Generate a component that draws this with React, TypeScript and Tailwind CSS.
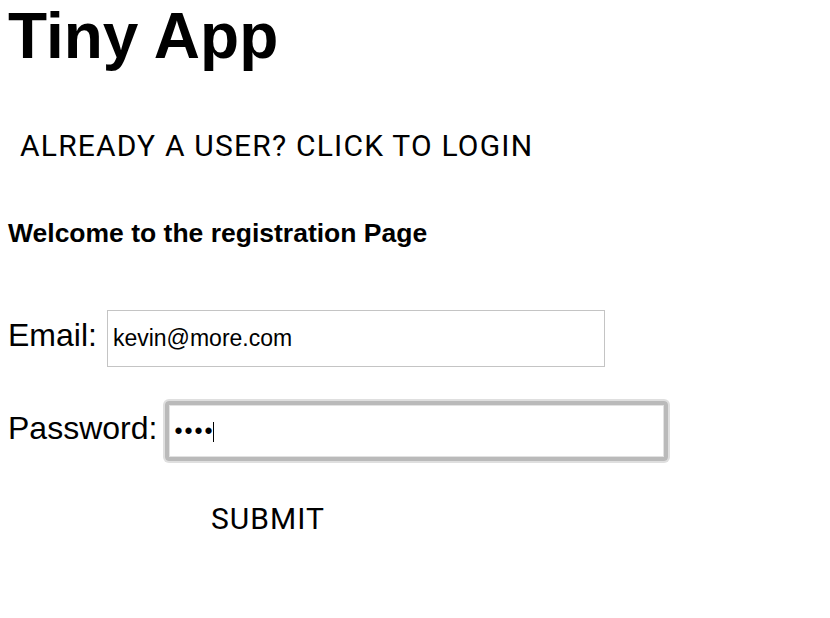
export default function App() {
  return (
    <div className="min-h-screen bg-white text-black px-2 font-['Liberation_Sans',Arial,sans-serif]">
      <h1 className="text-[64px] leading-[72px] font-bold">Tiny App</h1>

      <button className="mt-[57px] ml-3 block text-[30px] leading-[34px] tracking-[1.2px] uppercase font-['Roboto',sans-serif] text-black">
        Already a user? Click to login
      </button>

      <h3 className="mt-[55px] text-[26.5px] leading-[30px] font-bold">Welcome to the registration Page</h3>

      <form className="flex flex-col">
        <div className="mt-[62px] flex items-start">
          <label htmlFor="email" className="mt-[7px] text-[32px] leading-[36px]">Email:</label>
          <input
            id="email"
            type="email"
            defaultValue="kevin@more.com"
            className="ml-[10px] w-[498px] h-[57px] border border-[#c4c4c4] px-[5px] text-[23px] outline-none"
          />
        </div>

        <div className="mt-[34px] flex items-start">
          <label htmlFor="password" className="mt-[9px] text-[32px] leading-[36px]">Password:</label>
          <div className="relative ml-[8px]">
            <input
              id="password"
              type="password"
              defaultValue="test"
              className="w-[503px] h-[60px] border-4 border-[#bababa] rounded-[4px] shadow-[0_0_0_2px_#dfdfdf,inset_0_0_0_1px_#e2e2e2] px-[5px] text-[23px] tracking-[2px] outline-none"
            />
            <span className="absolute left-[48px] top-[21px] w-px h-[20px] bg-black" />
          </div>
        </div>

        <button
          type="submit"
          className="mt-[41px] ml-[203px] self-start text-[30px] leading-[34px] tracking-[1px] font-['Roboto',sans-serif] text-black"
        >
          SUBMIT
        </button>
      </form>
    </div>
  )
}
